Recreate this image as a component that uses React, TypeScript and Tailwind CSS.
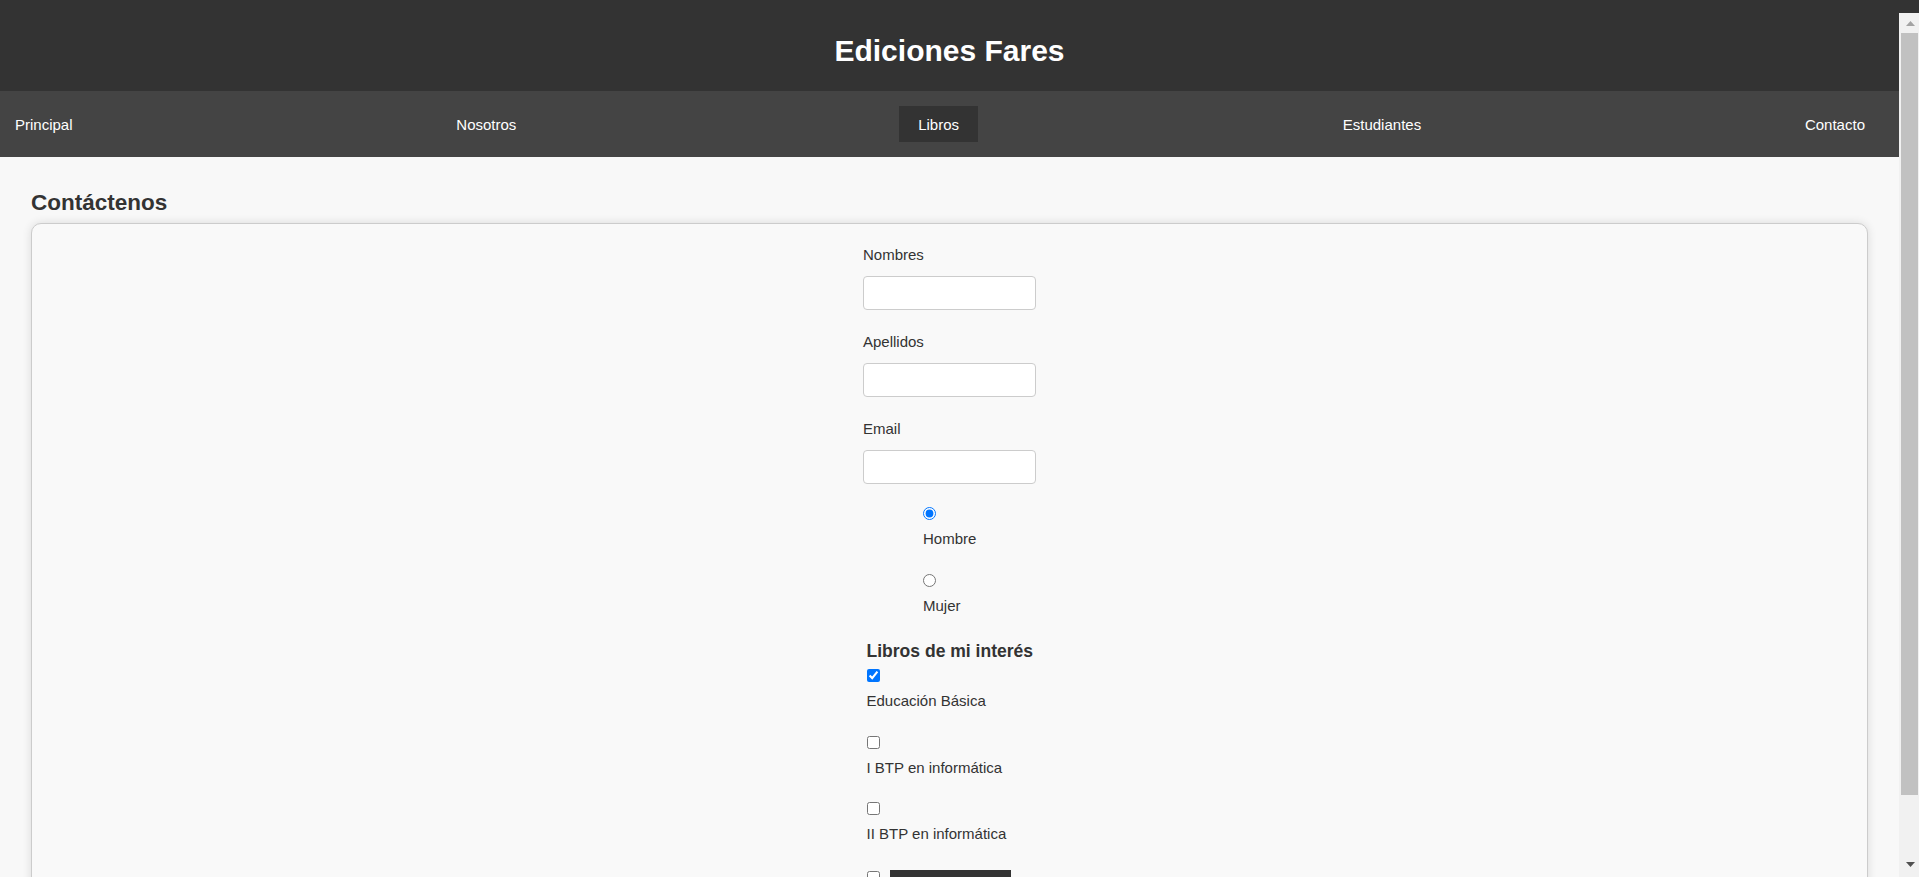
import { useState } from "react";

const navLinks = ["Principal", "Nosotros", "Libros", "Estudiantes", "Contacto"];

const libros = [
  { id: "basica", label: "Educación Básica", checked: true },
  { id: "btp1", label: "I BTP en informática", checked: false },
  { id: "btp2", label: "II BTP en informática", checked: false },
];

const Field = ({ label, first }: { label: string; first?: boolean }) => (
  <div className={first ? "" : "mt-[23px]"}>
    <label className="block leading-[17px]">{label}</label>
    <input
      type="text"
      className="mt-[13px] block h-[34px] w-[173px] rounded-[4px] border border-[#ccc] bg-white px-2 outline-none"
    />
  </div>
);

// window scrollbar as seen in the capture
const ScrollBar = () => (
  <aside className="fixed right-0 top-0 flex h-screen w-[20px] flex-col">
    <div className="h-[13px] bg-[#333]" />
    <div className="flex flex-1 flex-col bg-[#f1f1f1]">
      <div className="flex h-[20px] items-center justify-center pl-[2px]">
        <svg width="9" height="5" viewBox="0 0 9 5">
          <path d="M4.5 0 9 5H0z" fill="#a3a3a3" />
        </svg>
      </div>
      <div className="ml-[2px] mr-[1px] h-[762px] bg-[#c1c1c1]" />
      <div className="flex-1" />
      <div className="flex h-[17px] items-start justify-center pl-[2px] pt-[2px]">
        <svg width="9" height="5" viewBox="0 0 9 5">
          <path d="M0 0h9L4.5 5z" fill="#505050" />
        </svg>
      </div>
    </div>
  </aside>
);

const App = () => {
  const [sexo, setSexo] = useState("hombre");
  const active = "Libros";

  return (
    <div className="min-h-screen bg-[#f8f8f8] pr-[20px] font-['Liberation_Sans',Arial,sans-serif] text-[15px] text-[#333]">
      <div className="pb-[40px]">
        {/* header */}
        <header className="h-[91px] bg-[#333] pt-[34px] text-center">
          <h1 className="text-[30px] font-bold leading-[34px] text-white">
            Ediciones Fares
          </h1>
        </header>
        <nav className="flex h-[66px] items-center justify-between bg-[#444] pl-[15px] pr-[34px]">
          {navLinks.map((link) => (
            <a
              key={link}
              href="#"
              className={
                link === active
                  ? "-ml-[1px] -mr-[19px] bg-[#333] px-[19px] py-[9.5px] leading-[17px] text-white"
                  : "leading-[17px] text-white"
              }
            >
              {link}
            </a>
          ))}
        </nav>

        <main className="pt-[33px]">
          <h2 className="ml-[31px] text-[22.5px] font-bold leading-[26px] text-[#333]">
            Contáctenos
          </h2>
          <div className="mx-[31px] mt-[7px] rounded-[10px] border border-[#ccc] bg-[#f9f9f9] pt-[22px] pb-[24px] shadow-[0_0_10px_rgba(0,0,0,0.12)]">
            <form className="mx-auto w-[173px]">
              <Field label="Nombres" first />
              <Field label="Apellidos" />
              <Field label="Email" />

              {/* sexo */}
              <div className="ml-[60px]">
                <input
                  type="radio"
                  name="sexo"
                  checked={sexo === "hombre"}
                  onChange={() => setSexo("hombre")}
                  className="mt-[23px] block h-[13px] w-[13px]"
                />
                <label className="mt-[10px] block leading-[17px]">Hombre</label>
                <input
                  type="radio"
                  name="sexo"
                  checked={sexo === "mujer"}
                  onChange={() => setSexo("mujer")}
                  className="mt-[27px] block h-[13px] w-[13px]"
                />
                <label className="mt-[10px] block leading-[17px]">Mujer</label>
              </div>

              {/* libros */}
              <div className="ml-[3.5px] w-[260px]">
                <h3 className="mt-[27px] text-[17.55px] font-bold leading-[20px]">
                  Libros de mi interés
                </h3>
                {libros.map((libro, i) => (
                  <div key={libro.id}>
                    <input
                      type="checkbox"
                      defaultChecked={libro.checked}
                      className={
                        (i === 0 ? "mt-[8px]" : "mt-[26.5px]") +
                        " block h-[13px] w-[13px]"
                      }
                    />
                    <label className="mt-[10px] block leading-[17px]">
                      {libro.label}
                    </label>
                  </div>
                ))}
                <div className="mt-[28px] flex items-start gap-[10px]">
                  <input type="checkbox" className="mt-[1px] block h-[13px] w-[13px]" />
                  <button
                    type="submit"
                    aria-label="Enviar"
                    className="h-[38px] w-[121px] bg-[#333] text-white"
                  />
                </div>
              </div>
            </form>
          </div>
        </main>
      </div>
      <ScrollBar />
    </div>
  );
};

export default App;
